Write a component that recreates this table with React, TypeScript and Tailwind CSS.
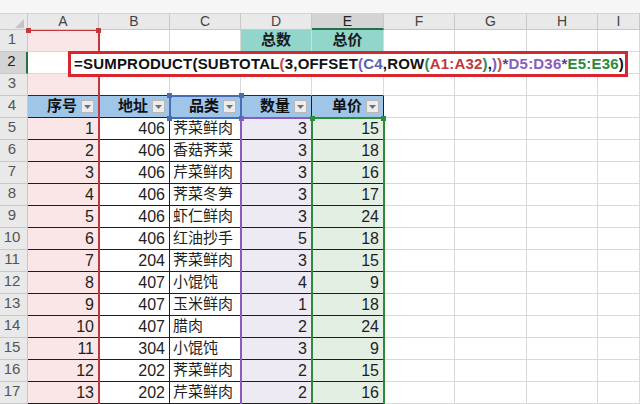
import React from 'react';

// 列定义：宽度与表头
const COLS = [
  { key: 'A', w: 'w-[71px]' },
  { key: 'B', w: 'w-[71px]' },
  { key: 'C', w: 'w-[71px]' },
  { key: 'D', w: 'w-[71px]' },
  { key: 'E', w: 'w-[72px]' },
  { key: 'F', w: 'w-[71px]' },
  { key: 'G', w: 'w-[72px]' },
  { key: 'H', w: 'w-[71px]' },
  { key: 'I', w: 'w-[42px]' }
];

// 序号, 地址, 品类, 数量, 单价
const ITEMS: [number, number, string, number, number][] = [
  [1, 406, '荠菜鲜肉', 3, 15],
  [2, 406, '香菇荠菜', 3, 18],
  [3, 406, '芹菜鲜肉', 3, 16],
  [4, 406, '荠菜冬笋', 3, 17],
  [5, 406, '虾仁鲜肉', 3, 24],
  [6, 406, '红油抄手', 5, 18],
  [7, 204, '荠菜鲜肉', 3, 15],
  [8, 407, '小馄饨', 4, 9],
  [9, 407, '玉米鲜肉', 1, 18],
  [10, 407, '腊肉', 2, 24],
  [11, 304, '小馄饨', 3, 9],
  [12, 202, '荠菜鲜肉', 2, 15],
  [13, 202, '芹菜鲜肉', 2, 16]
];

const HEADERS = ['序号', '地址', '品类', '数量', '单价'];

// 公式分段着色
const FORMULA: [string, string][] = [
  ['=SUMPRODUCT(SUBTOTAL', 'text-[#111]'],
  ['(', 'text-[#d0434a]'],
  ['3,OFFSET', 'text-[#111]'],
  ['(', 'text-[#7a5cb8]'],
  ['C4', 'text-[#5563b8]'],
  [',ROW', 'text-[#111]'],
  ['(', 'text-[#2f8a5a]'],
  ['A1:A32', 'text-[#c4373c]'],
  [')', 'text-[#2f8a5a]'],
  [',', 'text-[#111]'],
  [')', 'text-[#7a5cb8]'],
  [')', 'text-[#d0434a]'],
  ['*', 'text-[#5a3f86]'],
  ['D5:D36', 'text-[#8a5cc0]'],
  ['*', 'text-[#5a3f86]'],
  ['E5:E36', 'text-[#2e8a3c]'],
  [')', 'text-[#111]']
];

const FilterBtn: React.FC = () => (
  <span className="ml-[4px] flex h-[13px] w-[13px] shrink-0 items-center justify-center border border-[#b8b8b8] bg-[#ececec]">
    <svg width="7" height="4" viewBox="0 0 7 4">
      <path d="M0 0h7L3.5 4z" fill="#6f6f6f" />
    </svg>
  </span>
);

const App: React.FC = () => {
  const renderCell = (r: number, c: number) => {
    const col = COLS[c];
    const inTable = r >= 4 && r <= 17 && c <= 4;
    const edge = inTable
      ? 'border-r border-b border-[#1e1e1e]'
      : r === 3 && c <= 4
        ? 'border-r border-b border-r-[#d9d9d9] border-b-[#2a2a2a]'
        : 'border-r border-b border-[#d9d9d9]';
    let bg = 'bg-white';
    let content: React.ReactNode = null;
    let align = 'justify-end pr-[4px]';

    if (c === 0 && (r === 1 || r === 3 || r >= 5)) bg = 'bg-[#fae6e6]';
    if (r === 1 && (c === 3 || c === 4)) {
      bg = 'bg-[#91d5cb]';
      align = 'justify-center';
      content = <span className="text-[15px] font-bold text-[#1a1a1a]">{c === 3 ? '总数' : '总价'}</span>;
    }
    if (r === 4 && c <= 4) {
      bg = 'bg-[#9fc5e9]';
      content = (
        <>
          <span className="text-[15px] font-bold text-[#111]">{HEADERS[c]}</span>
          <FilterBtn />
        </>
      );
    }
    if (r >= 5 && c <= 4) {
      const item = ITEMS[r - 5];
      if (c === 3) bg = 'bg-[#eeeaf4]';
      if (c === 4) bg = 'bg-[#e4efe4]';
      if (c === 2) {
        align = 'justify-start pl-[3px]';
        content = <span className="text-[15px] text-[#1e1e1e]">{item[2]}</span>;
      } else {
        content = <span className="text-[16px] text-[#1e1e1e]">{item[c]}</span>;
      }
    }

    return (
      <div key={col.key} className={`flex h-full shrink-0 items-center ${col.w} ${edge} ${bg} ${align}`}>
        {content}
      </div>
    );
  };

  return (
    <div className="relative h-[404px] w-[640px] overflow-hidden bg-white font-['Liberation_Sans','Noto_Sans_CJK_SC',sans-serif]">
      {/* 顶部残留的编辑栏 */}
      <div className="h-[14px] border-b border-[#d4d4d4] bg-[#f6f6f6]" />

      {/* 列标题 */}
      <div className="flex h-[16px]">
        <div className="flex w-[28px] shrink-0 items-end justify-end border-r border-b border-[#c8c8c8] bg-[#e9e9e9] pb-[1px] pr-[3px]">
          <svg width="9" height="9" viewBox="0 0 9 9">
            <path d="M9 0v9H0z" fill="#c4c4c4" />
          </svg>
        </div>
        {COLS.map((col) => (
          <div
            key={col.key}
            className={`flex shrink-0 items-center justify-center ${col.w} border-r text-[14px] ${
              col.key === 'E'
                ? 'border-b-2 border-b-[#217346] border-r-[#c8c8c8] bg-[#d4d4d4] text-[#222]'
                : 'border-b border-[#c8c8c8] bg-[#e9e9e9] text-[#444]'
            }`}
          >
            {col.key}
          </div>
        ))}
      </div>

      {/* 行 */}
      {Array.from({ length: 17 }, (_, i) => i + 1).map((r) => (
        <div key={r} className="flex h-[22px]">
          <div
            className={`flex w-[28px] shrink-0 items-end justify-center border-b border-[#c8c8c8] pb-[1px] pr-[3px] text-[15px] ${
              r === 2 ? 'border-r-2 border-r-[#217346] bg-[#d4d4d4] text-[#222]' : 'border-r bg-[#e9e9e9] text-[#555]'
            }`}
          >
            {r}
          </div>
          {COLS.map((_, c) => renderCell(r, c))}
        </div>
      ))}

      {/* 引用区域：A1:A32 红色 */}
      <div className="absolute left-[28px] top-[30px] h-[380px] w-[72px] border-t border-r-2 border-[#c4373c]">
        <div className="absolute -left-[2px] -top-[3px] h-[5px] w-[5px] bg-[#c4373c]" />
        <div className="absolute -right-[3px] -top-[3px] h-[5px] w-[5px] bg-[#c4373c]" />
      </div>

      {/* 引用区域：D5:D36 紫色 */}
      <div className="absolute left-[240px] top-[117px] h-[300px] w-[73px] border-l-2 border-t-2 border-[#8a5cc0]">
        <div className="absolute -left-[3px] -top-[3px] h-[5px] w-[5px] bg-[#8a5cc0]" />
      </div>

      {/* 引用区域：E5:E36 绿色 */}
      <div className="absolute left-[311px] top-[117px] h-[300px] w-[74px] border-x-2 border-t-2 border-[#2e8a3c]">
        <div className="absolute -left-[3px] -top-[3px] h-[5px] w-[5px] bg-[#2e8a3c]" />
        <div className="absolute -right-[3px] -top-[3px] h-[5px] w-[5px] bg-[#2e8a3c]" />
      </div>

      {/* 引用区域：C4 蓝色 */}
      <div className="absolute left-[169px] top-[95px] h-[24px] w-[73px] border-2 border-[#4a6cb3]">
        <div className="absolute -left-[4px] -top-[4px] h-[5px] w-[5px] bg-[#4a6cb3]" />
        <div className="absolute -right-[4px] -top-[4px] h-[5px] w-[5px] bg-[#4a6cb3]" />
        <div className="absolute -bottom-[4px] -left-[4px] h-[5px] w-[5px] bg-[#4a6cb3]" />
      </div>

      {/* 公式编辑框 */}
      <div className="absolute left-[68px] top-[51px] flex h-[26px] w-[560px] items-center whitespace-nowrap border-[3px] border-[#d7262e] bg-white pl-[3px] text-[15px] font-bold tracking-[0.2px]">
        {FORMULA.map(([t, cls], i) => (
          <span key={i} className={cls}>
            {t}
          </span>
        ))}
      </div>
    </div>
  );
};

export default App;
